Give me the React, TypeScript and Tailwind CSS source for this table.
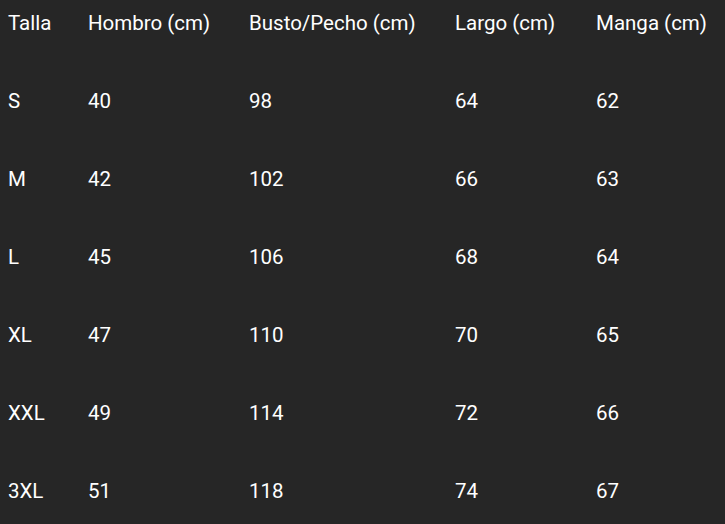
import React from "react"

const headers = ["Talla", "Hombro (cm)", "Busto/Pecho (cm)", "Largo (cm)", "Manga (cm)"]

const rows = [
  ["S", "40", "98", "64", "62"],
  ["M", "42", "102", "66", "63"],
  ["L", "45", "106", "68", "64"],
  ["XL", "47", "110", "70", "65"],
  ["XXL", "49", "114", "72", "66"],
  ["3XL", "51", "118", "74", "67"]
]

function Row({ cells }: { cells: string[] }) {
  return (
    <div className="grid grid-cols-[80px_161px_206px_141px_1fr] h-[78px] items-center">
      {cells.map((c, i) => (
        <div key={i} className="pl-2 whitespace-nowrap">
          {c}
        </div>
      ))}
    </div>
  )
}

export default function App() {
  return (
    <div className="w-[725px] h-[524px] overflow-hidden bg-[#262626] text-white text-[20.5px] font-['Roboto',sans-serif]">
      <div className="-mt-[16px]">
        <Row cells={headers} />
        {rows.map((r, i) => (
          <Row key={i} cells={r} />
        ))}
      </div>
    </div>
  )
}
